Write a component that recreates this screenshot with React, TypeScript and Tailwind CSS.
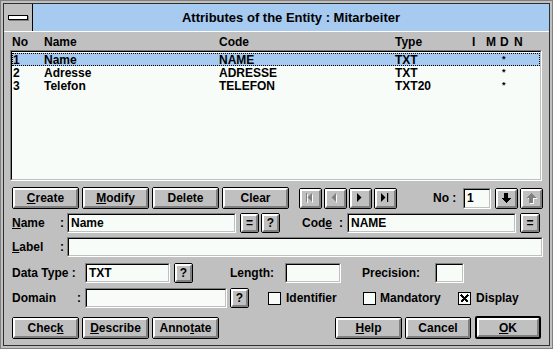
import React from "react";

type BtnProps = {
  w: string;
  h?: string;
  children: React.ReactNode;
  isDefault?: boolean;
  className?: string;
};

function Btn({ w, h = "h-[22px]", children, isDefault, className = "" }: BtnProps) {
  return (
    <div
      className={`flex shrink-0 ${w} ${h} rounded-[2px] border-black ${
        isDefault ? "border-2" : "border"
      } ${className}`}
    >
      <div className="flex flex-1 items-center justify-center border-2 border-t-white border-l-white border-r-[#808080] border-b-[#808080] bg-[#c0c0c0] leading-none">
        {children}
      </div>
    </div>
  );
}

function Field({ w, value, className = "" }: { w: string; value?: string; className?: string }) {
  return (
    <div
      className={`flex h-[20px] shrink-0 ${w} border border-t-[#808080] border-l-[#808080] border-r-white border-b-white ${className}`}
    >
      <div className="flex flex-1 items-center border border-t-black border-l-black border-r-[#c0c0c0] border-b-[#c0c0c0] bg-[#f8fcf8] pl-[2px] leading-none">
        {value}
      </div>
    </div>
  );
}

function Check({ checked, className = "" }: { checked?: boolean; className?: string }) {
  return (
    <div
      className={`flex h-[13px] w-[13px] shrink-0 items-center justify-center border border-black bg-[#f8fcf8] ${className}`}
    >
      {checked && (
        <svg width="9" height="9" viewBox="0 0 9 9" shapeRendering="crispEdges">
          <path d="M1 1 L8 8 M8 1 L1 8" stroke="black" strokeWidth="1.6" />
        </svg>
      )}
    </div>
  );
}

function NavIcon({ kind, disabled }: { kind: "first" | "prev" | "next" | "last"; disabled?: boolean }) {
  const fill = disabled ? "#808080" : "#000";
  const shapes = (dx: number, color: string) => (
    <g transform={`translate(${dx} ${dx})`} fill={color}>
      {kind === "first" && (
        <>
          <rect x="0" y="0" width="1" height="9" />
          <polygon points="6,0 6,9 1.5,4.5" />
        </>
      )}
      {kind === "prev" && <polygon points="5,0 5,9 0.5,4.5" />}
      {kind === "next" && <polygon points="1,0 1,9 5.5,4.5" />}
      {kind === "last" && (
        <>
          <polygon points="0,0 0,9 4.5,4.5" />
          <rect x="6" y="0" width="1.2" height="9" />
        </>
      )}
    </g>
  );
  return (
    <svg width="9" height="11" viewBox="0 0 9 11">
      {disabled && shapes(1, "#ffffff")}
      {shapes(0, fill)}
    </svg>
  );
}

function ArrowIcon({ up, disabled }: { up?: boolean; disabled?: boolean }) {
  const arrow = (dx: number, color: string) => (
    <g transform={`translate(${dx} ${dx})`} fill={color}>
      {up ? (
        <>
          <polygon points="0,5 10,5 5,0" />
          <rect x="3" y="5" width="4" height="5" />
        </>
      ) : (
        <>
          <rect x="3" y="0" width="4" height="5" />
          <polygon points="0,5 10,5 5,10" />
        </>
      )}
    </g>
  );
  return (
    <svg width="11" height="11" viewBox="0 0 11 11" shapeRendering="crispEdges">
      {disabled && arrow(1, "#ffffff")}
      {arrow(0, disabled ? "#808080" : "#000")}
    </svg>
  );
}

const rows = [
  { no: "1", name: "Name", code: "NAME", type: "TXT" },
  { no: "2", name: "Adresse", code: "ADRESSE", type: "TXT" },
  { no: "3", name: "Telefon", code: "TELEFON", type: "TXT20" },
];

export default function App() {
  return (
    <div className="h-[349px] w-[553px] overflow-hidden border border-[#808080] bg-[#c0c0c0] p-[2px] font-['Liberation_Sans',Arial,sans-serif] text-[12px] font-bold text-black">
      <div className="flex h-full flex-col border border-[#303030]">
        {/* title bar */}
        <div className="flex h-[28px] shrink-0 border-b border-white bg-[#a6caf0]">
          <div className="flex w-[29px] shrink-0 items-center justify-center border-r border-black bg-[#c0c0c0]">
            <div className="h-[5px] w-[20px] border border-black bg-white shadow-[1px_1px_0_#808080]" />
          </div>
          <div className="flex flex-1 items-center justify-center text-[13px]">
            Attributes of the Entity : Mitarbeiter
          </div>
        </div>

        {/* column headers */}
        <div className="mt-[4px] flex h-[12px] items-center pl-[8px] leading-none">
          <span className="w-[32px]">No</span>
          <span className="w-[175px]">Name</span>
          <span className="w-[176px]">Code</span>
          <span className="w-[77px]">Type</span>
          <span className="w-[14px]">I</span>
          <span className="w-[14px]">M</span>
          <span className="w-[14px]">D</span>
          <span>N</span>
        </div>

        {/* list */}
        <div className="ml-[6px] mt-[2px] flex h-[131px] w-[532px] border border-t-[#808080] border-l-[#808080] border-r-white border-b-white">
          <div className="flex flex-1 flex-col border border-t-black border-l-black border-r-[#c0c0c0] border-b-[#c0c0c0] bg-[#f8fcf8] pt-[1px]">
            {rows.map((r, i) => (
              <div
                key={r.no}
                className={`flex h-[13px] items-center leading-none ${
                  i === 0 ? "border border-dotted border-black bg-[#a6caf0]" : "border border-transparent"
                }`}
              >
                <span className="w-[31px]">{r.no}</span>
                <span className="w-[175px]">{r.name}</span>
                <span className="w-[176px]">{r.code}</span>
                <span className="w-[77px]">{r.type}</span>
                <span className="w-[14px]" />
                <span className="w-[14px]" />
                <span className="w-[14px] pl-[2px] text-[9px]">*</span>
              </div>
            ))}
          </div>
        </div>

        {/* action buttons + navigation */}
        <div className="mt-[6px] flex items-center pl-[8px]">
          <Btn w="w-[67px]">
            <span><u>C</u>reate</span>
          </Btn>
          <Btn w="w-[67px]" className="ml-[3px]">
            <span><u>M</u>odify</span>
          </Btn>
          <Btn w="w-[67px]" className="ml-[3px]">
            <span>Delete</span>
          </Btn>
          <Btn w="w-[67px]" className="ml-[3px]">
            <span>Clear</span>
          </Btn>
          <Btn w="w-[23px]" h="h-[21px]" className="ml-[10px]">
            <NavIcon kind="first" disabled />
          </Btn>
          <Btn w="w-[23px]" h="h-[21px]" className="ml-[2px]">
            <NavIcon kind="prev" disabled />
          </Btn>
          <Btn w="w-[23px]" h="h-[21px]" className="ml-[2px]">
            <NavIcon kind="next" />
          </Btn>
          <Btn w="w-[23px]" h="h-[21px]" className="ml-[2px]">
            <NavIcon kind="last" />
          </Btn>
          <span className="ml-[36px] w-[30px]">No :</span>
          <Field w="w-[28px]" value="1" className="h-[21px]" />
          <Btn w="w-[23px]" h="h-[21px]" className="ml-[4px]">
            <ArrowIcon />
          </Btn>
          <Btn w="w-[23px]" h="h-[21px]" className="ml-[2px]">
            <ArrowIcon up disabled />
          </Btn>
        </div>

        {/* name / code */}
        <div className="mt-[4px] flex items-center pl-[8px]">
          <span className="w-[48px]"><u>N</u>ame</span>
          <span className="w-[7px]">:</span>
          <Field w="w-[169px]" value="Name" />
          <Btn w="w-[19px]" h="h-[20px]" className="ml-[4px]">=</Btn>
          <Btn w="w-[19px]" h="h-[20px]" className="ml-[2px]">?</Btn>
          <span className="ml-[22px] w-[37px]">Cod<u>e</u></span>
          <span className="w-[8px]">:</span>
          <Field w="w-[169px]" value="NAME" />
          <Btn w="w-[20px]" h="h-[20px]" className="ml-[4px]">=</Btn>
        </div>

        {/* label */}
        <div className="mt-[4px] flex items-center pl-[8px]">
          <span className="w-[48px]"><u>L</u>abel</span>
          <span className="w-[7px]">:</span>
          <Field w="w-[476px]" />
        </div>

        {/* data type */}
        <div className="mt-[6px] flex items-center pl-[8px]">
          <span className="w-[73px]">Data Type :</span>
          <Field w="w-[85px]" value="TXT" />
          <Btn w="w-[19px]" h="h-[20px]" className="ml-[4px]">?</Btn>
          <span className="ml-[37px] w-[55px]">Length:</span>
          <Field w="w-[56px]" />
          <span className="ml-[21px] w-[73px]">Precision:</span>
          <Field w="w-[29px]" />
        </div>

        {/* domain + flags */}
        <div className="mt-[5px] flex items-center pl-[8px]">
          <span className="w-[65px]">Domain</span>
          <span className="w-[8px]">:</span>
          <Field w="w-[142px]" />
          <Btn w="w-[19px]" h="h-[20px]" className="ml-[3px]">?</Btn>
          <Check className="ml-[19px]" />
          <span className="ml-[5px] w-[77px]">Identifier</span>
          <Check />
          <span className="ml-[4px] w-[78px]">Mandatory</span>
          <Check checked />
          <span className="ml-[5px]">Display</span>
        </div>

        {/* bottom buttons */}
        <div className="mt-[8px] flex items-center pl-[8px]">
          <Btn w="w-[67px]">
            <span>Chec<u>k</u></span>
          </Btn>
          <Btn w="w-[67px]" className="ml-[3px]">
            <span><u>D</u>escribe</span>
          </Btn>
          <Btn w="w-[67px]" className="ml-[3px]">
            <span>Anno<u>t</u>ate</span>
          </Btn>
          <Btn w="w-[67px]" className="ml-[116px]">
            <span><u>H</u>elp</span>
          </Btn>
          <Btn w="w-[66px]" className="ml-[3px]">
            <span>Cancel</span>
          </Btn>
          <Btn w="w-[66px]" isDefault className="ml-[4px] h-[23px]">
            <span><u>O</u>K</span>
          </Btn>
        </div>
      </div>
    </div>
  );
}
